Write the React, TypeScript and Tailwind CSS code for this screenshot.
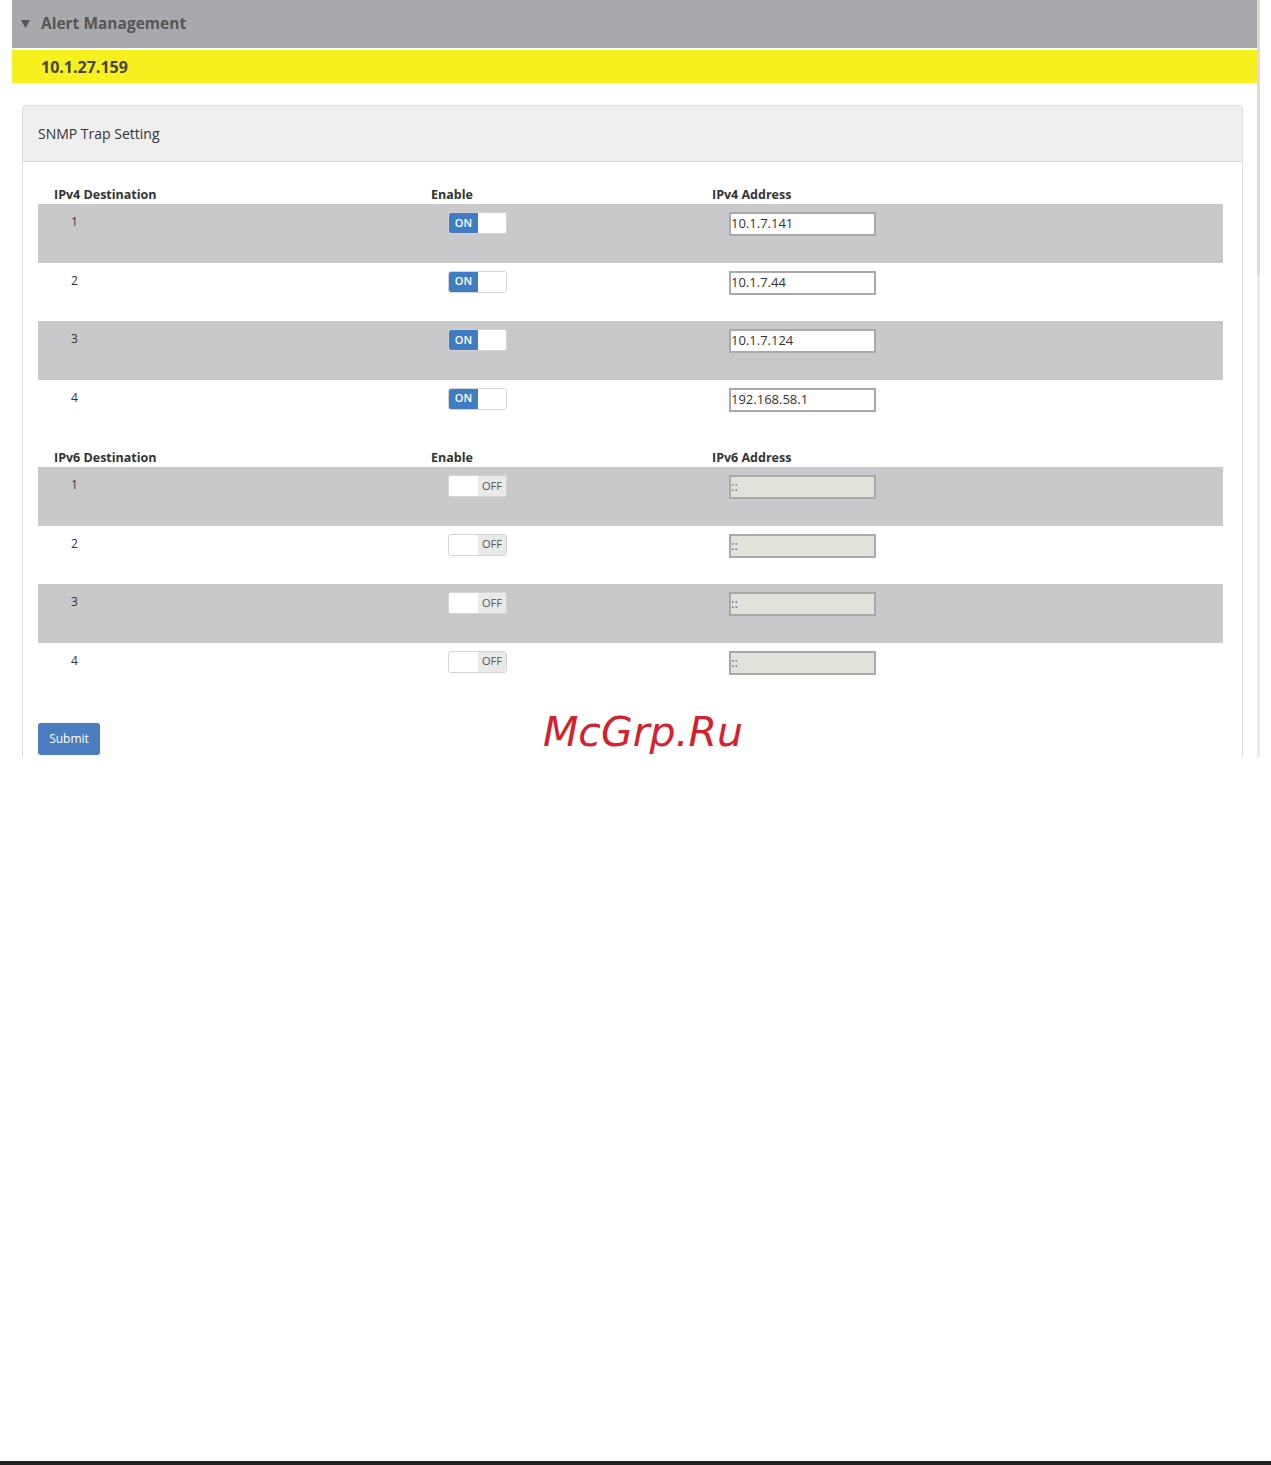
import React from "react";

const FONT = { fontFamily: "'Open Sans', Lato, sans-serif" };

const ipv4 = ["10.1.7.141", "10.1.7.44", "10.1.7.124", "192.168.58.1"];
const ipv6 = ["::", "::", "::", "::"];

const Toggle = ({ on }: { on: boolean }) => (
  <div className="flex h-[22px] w-[59px] overflow-hidden rounded-[3px] border border-[#d4d4d4] bg-white">
    {on ? (
      <>
        <span className="flex w-[29px] items-center justify-center bg-[#3f7cc4] text-[11px] font-semibold text-white">ON</span>
        <span className="flex-1 bg-white" />
      </>
    ) : (
      <>
        <span className="w-[29px] bg-white" />
        <span className="flex flex-1 items-center justify-center bg-[#e9e9e9] text-[11px] text-[#555]">OFF</span>
      </>
    )}
  </div>
);

const Table = ({ kind, rows, disabled }: { kind: string; rows: string[]; disabled?: boolean }) => (
  <div>
    <div className="flex h-[19px] items-center pt-[1px] text-[12.5px] font-bold text-[#333]">
      <div className="w-[377px] pl-[16px]">{kind} Destination</div>
      <div className="w-[281px] pl-[16px]">Enable</div>
      <div className="pl-[16px]">{kind} Address</div>
    </div>
    {rows.map((addr, i) => (
      <div key={i} className={`flex h-[58.5px] items-start ${i % 2 === 0 ? "bg-[#c9c9cb]" : "bg-white"}`}>
        <div className="w-[377px] pl-[33px] pt-[9px] text-[12px] text-[#333]">{i + 1}</div>
        <div className="w-[281px] pl-[33px] pt-[8px]">
          <Toggle on={!disabled} />
        </div>
        <div className="pl-[33px] pt-[8px]">
          <div
            className={`flex h-[24px] w-[147px] items-center border-2 border-[#a9a9a9] text-[13px] ${
              disabled ? "bg-[#e3e2da] text-[#666]" : "bg-white text-[#333]"
            }`}
          >
            {addr}
          </div>
        </div>
      </div>
    ))}
  </div>
);

export default function App() {
  return (
    <div className="bg-white" style={FONT}>
      <div className="flex h-[757px] overflow-hidden">
        <div className="w-[12px]" />
        <div className="w-[1245px]">
          <div className="flex h-[48px] items-center bg-[#a9a8ac] pl-[9px] text-[15.5px] font-bold text-[#555]">
            <svg width="9" height="8" viewBox="0 0 9 8" className="mr-[11px]">
              <polygon points="0,0 9,0 4.5,8" fill="#555" />
            </svg>
            Alert Management
          </div>
          <div className="mt-[2px] flex h-[33px] items-center bg-[#f6f01f] pl-[29px] text-[16px] font-bold text-[#444]">
            10.1.27.159
          </div>
          <div className="ml-[10px] mt-[22px] w-[1221px] rounded-t-[3px] border border-[#dcdcdc]">
            <div className="flex h-[56px] items-center border-b border-[#dcdcdc] bg-[#f0eff0] pl-[15px] text-[14px] text-[#333]">
              SNMP Trap Setting
            </div>
            <div className="relative pl-[15px] pr-[19px] pt-[23px] pb-[40px]">
              <Table kind="IPv4" rows={ipv4} />
              <div className="h-[10px]" />
              <Table kind="IPv6" rows={ipv6} disabled />
              <div className="mt-[22px] flex items-center">
                <button className="h-[32px] w-[62px] rounded-[3px] bg-[#4a7cc0] text-[12px] text-white">Submit</button>
              </div>
              <div
                className="absolute left-[520px] top-[540px] text-[41px] italic text-[#d5212b]"
                style={{ fontFamily: "'DejaVu Sans', sans-serif" }}
              >
                McGrp.Ru
              </div>
            </div>
          </div>
        </div>
        <div className="flex w-[3px] flex-col bg-[#ebebeb]">
          <div className="h-[275px] bg-[#dcdcdc]" />
        </div>
      </div>
      <div className="h-[704px]" />
      <div className="h-[4px] bg-[#231f20]" />
    </div>
  );
}
